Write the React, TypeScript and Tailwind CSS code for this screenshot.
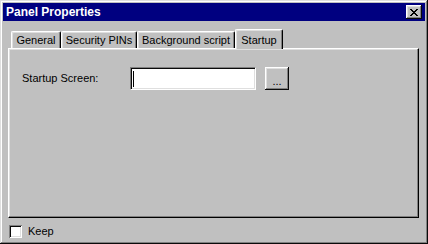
import React from 'react';

const TABS = [
  { label: 'General', w: 'w-[50px]' },
  { label: 'Security PINs', w: 'w-[76px]' },
  { label: 'Background script', w: 'w-[98px]' },
];

function CloseIcon() {
  // the little pixel X from the old caption buttons
  const px = [
    [0, 0], [1, 0], [6, 0], [7, 0],
    [1, 1], [2, 1], [5, 1], [6, 1],
    [2, 2], [3, 2], [4, 2], [5, 2],
    [3, 3], [4, 3],
    [2, 4], [3, 4], [4, 4], [5, 4],
    [1, 5], [2, 5], [5, 5], [6, 5],
    [0, 6], [1, 6], [6, 6], [7, 6],
  ];
  return (
    <svg width="8" height="7" viewBox="0 0 8 7" shapeRendering="crispEdges">
      {px.map(([x, y]) => (
        <rect key={`${x}-${y}`} x={x} y={y} width="1" height="1" fill="#000" />
      ))}
    </svg>
  );
}

export default function App() {
  return (
    <div
      className="w-[428px] h-[244px] bg-[#c0c0c0] p-[3px] flex flex-col text-[11px] text-black shadow-[inset_-1px_-1px_#0a0a0a,inset_1px_1px_#dfdfdf,inset_-2px_-2px_#808080,inset_2px_2px_#ffffff]"
      style={{ fontFamily: '"Liberation Sans", Arial, sans-serif' }}
    >
      {/* Title bar */}
      <div className="h-[18px] bg-[#000080] flex items-center justify-between pl-[3px] pr-[3px]">
        <span className="text-white font-bold text-[12px] leading-none">Panel Properties</span>
        <button className="w-[16px] h-[14px] bg-[#c0c0c0] flex items-center justify-center shadow-[inset_-1px_-1px_#0a0a0a,inset_1px_1px_#ffffff,inset_-2px_-2px_#808080,inset_2px_2px_#dfdfdf]">
          <CloseIcon />
        </button>
      </div>

      {/* Tabs */}
      <div className="mt-[8px] ml-[5px] mr-[6px] flex flex-col">
        <div className="flex items-end h-[19px] pl-[3px]">
          {TABS.map((t) => (
            <div
              key={t.label}
              className={`${t.w} h-[17px] flex items-center justify-center border-t border-l border-r border-t-white border-l-white border-r-black rounded-tl-[2px] rounded-tr-[2px] shadow-[inset_-1px_0_#808080,inset_1px_1px_#dfdfdf]`}
            >
              {t.label}
            </div>
          ))}
          <div className="relative z-10 w-[48px] h-[20px] -mb-px bg-[#c0c0c0] flex items-start justify-center pt-[2px] border-t border-l border-r border-t-white border-l-white border-r-black rounded-tl-[2px] rounded-tr-[2px] shadow-[inset_-1px_0_#808080,inset_1px_1px_#dfdfdf]">
            Startup
          </div>
        </div>

        {/* Panel */}
        <div className="h-[170px] border border-t-white border-l-white border-r-black border-b-black shadow-[inset_-1px_-1px_#808080,inset_1px_1px_#dfdfdf] pt-[18px] pl-[13px]">
          <div className="flex items-center">
            <span className="w-[108px]">Startup Screen:</span>
            <div className="w-[126px] h-[23px] bg-white border border-t-[#808080] border-l-[#808080] border-r-white border-b-white shadow-[inset_1px_1px_#0a0a0a,inset_-1px_-1px_#dfdfdf] flex items-center pl-[2px]">
              <span className="w-px h-[16px] bg-black" />
            </div>
            <button className="ml-[9px] w-[24px] h-[23px] bg-[#c0c0c0] flex items-end justify-center pb-[3px] leading-none shadow-[inset_-1px_-1px_#0a0a0a,inset_1px_1px_#ffffff,inset_-2px_-2px_#808080,inset_2px_2px_#dfdfdf]">
              ...
            </button>
          </div>
        </div>
      </div>

      {/* Keep */}
      <div className="mt-[5px] ml-[6px] flex items-center gap-[6px]">
        <div className="w-[13px] h-[13px] bg-white shadow-[inset_1px_1px_#808080,inset_-1px_-1px_#ffffff,inset_2px_2px_#0a0a0a,inset_-2px_-2px_#dfdfdf]" />
        <span>Keep</span>
      </div>
    </div>
  );
}
